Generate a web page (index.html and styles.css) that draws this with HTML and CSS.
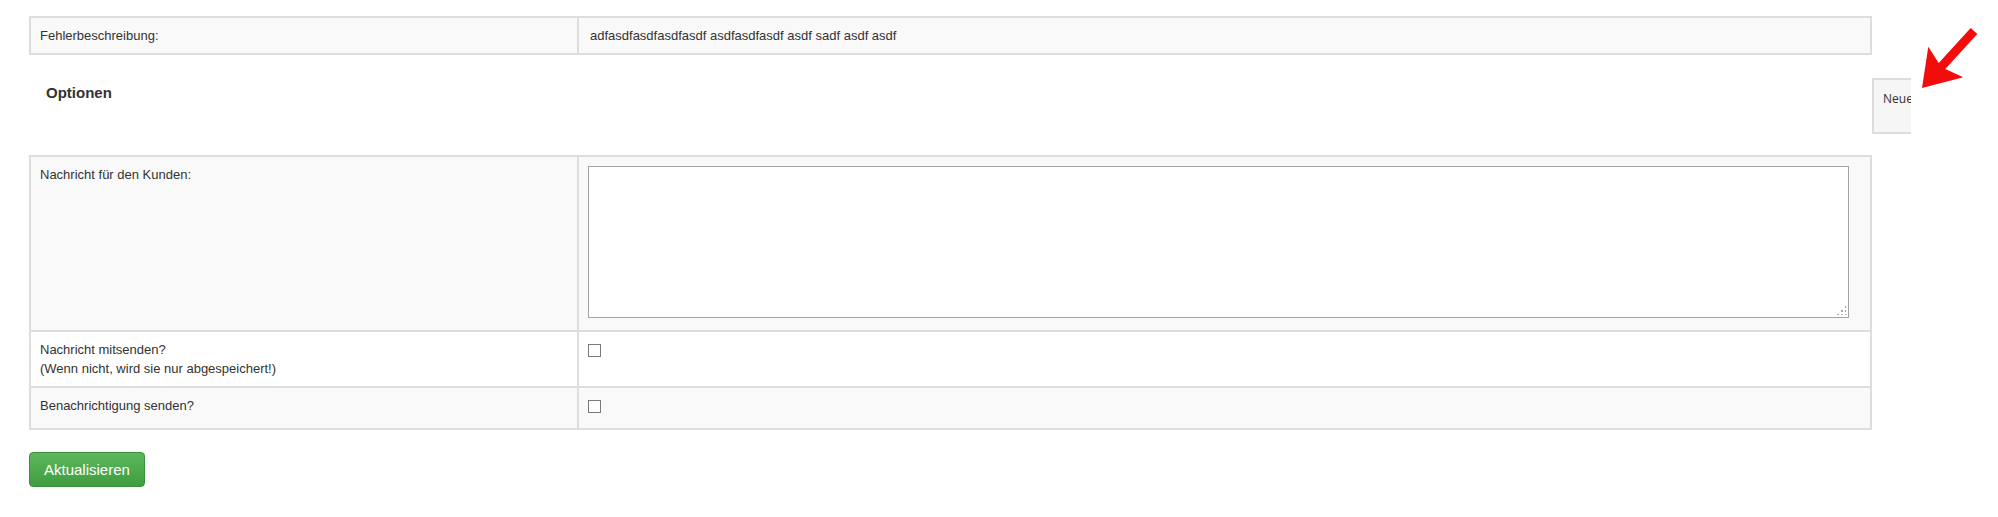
FILE: index.html
```html
<!DOCTYPE html>
<html lang="de">
<head>
<meta charset="utf-8">
<title>Optionen</title>
<link rel="stylesheet" href="styles.css">
</head>
<body>
<div class="page">
  <div class="main">
    <div class="grid info">
      <div class="cell odd">Fehlerbeschreibung:</div>
      <div class="cell odd value">adfasdfasdfasdfasdf asdfasdfasdf asdf sadf asdf asdf</div>
    </div>

    <h3 class="section-title">Optionen</h3>

    <div class="grid options">
      <div class="cell odd">Nachricht für den Kunden:</div>
      <div class="cell odd">
        <div class="textarea-wrap">
          <textarea class="message"></textarea>
          <span class="grip"></span>
        </div>
      </div>

      <div class="cell">Nachricht mitsenden?<br>(Wenn nicht, wird sie nur abgespeichert!)</div>
      <div class="cell"><input type="checkbox" class="check"></div>

      <div class="cell odd">Benachrichtigung senden?</div>
      <div class="cell odd"><input type="checkbox" class="check"></div>
    </div>

    <button class="btn-success" type="button">Aktualisieren</button>
  </div>

  <aside class="side">
    <div class="neue">Neue</div>
  </aside>
</div>

<svg class="arrow" width="75" height="75" viewBox="0 0 75 75" aria-hidden="true">
  <polygon points="7,68 13.3,26.7 23.7,43 55.7,8 62.3,14 30.3,49 48.3,57.3" fill="#f20c0c"/>
</svg>
</body>
</html>
```

FILE: styles.css
```css
html, body {
  margin: 0;
  padding: 0;
  background: #ffffff;
}

body {
  font-family: "Liberation Sans", Arial, sans-serif;
  font-size: 13px;
  line-height: 19px;
  color: #333333;
}

.page {
  display: flex;
  align-items: flex-start;
  padding: 16px 0 0 29px;
}

.main {
  width: 1843px;
  flex: none;
}

.grid {
  display: grid;
  grid-template-columns: 546px 1fr;
  gap: 2px;
  background: #dddddd;
  border: 2px solid #dddddd;
}

.cell {
  background: #ffffff;
  padding: 8px 9px;
}

.cell.odd {
  background: #f9f9f9;
}

.cell.value {
  padding-left: 11px;
}

.section-title {
  margin: 28px 0 52px 17px;
  font-size: 15px;
  line-height: 20px;
  font-weight: bold;
  color: #333333;
}

.textarea-wrap {
  position: relative;
  width: 1261px;
  margin: 1px 0 4px;
}

.message {
  display: block;
  box-sizing: border-box;
  width: 1261px;
  height: 152px;
  margin: 0;
  padding: 4px 6px;
  border: 1px solid #a3a3a3;
  background: #ffffff;
  resize: none;
  font-family: "Liberation Sans", Arial, sans-serif;
  font-size: 13px;
  outline: none;
}

.grip {
  position: absolute;
  right: 3px;
  bottom: 3px;
  width: 10px;
  height: 10px;
  background:
    radial-gradient(circle, #a8a8a8 0.9px, transparent 1.2px) 8px 0 / 4px 4px no-repeat,
    radial-gradient(circle, #a8a8a8 0.9px, transparent 1.2px) 4px 4px / 4px 4px no-repeat,
    radial-gradient(circle, #a8a8a8 0.9px, transparent 1.2px) 8px 4px / 4px 4px no-repeat,
    radial-gradient(circle, #a8a8a8 0.9px, transparent 1.2px) 0 8px / 4px 4px no-repeat,
    radial-gradient(circle, #a8a8a8 0.9px, transparent 1.2px) 4px 8px / 4px 4px no-repeat,
    radial-gradient(circle, #a8a8a8 0.9px, transparent 1.2px) 8px 8px / 4px 4px no-repeat;
}

.check {
  -webkit-appearance: none;
  appearance: none;
  display: block;
  box-sizing: border-box;
  width: 13px;
  height: 13px;
  margin: 4px 0 7px;
  border: 1px solid #7a7a7a;
  border-radius: 0;
  background: #fdfdfd;
}

.btn-success {
  display: inline-block;
  box-sizing: border-box;
  height: 35px;
  margin-top: 22px;
  padding: 0 14px;
  border: 1px solid #3b8f3b;
  border-radius: 4px;
  background: linear-gradient(to bottom, #5cb85c 0%, #3f9c3f 100%);
  color: #ffffff;
  font-family: "Liberation Sans", Arial, sans-serif;
  font-size: 15px;
  line-height: 33px;
  cursor: pointer;
}

.side {
  flex: none;
  width: 39px;
  overflow: hidden;
  margin-top: 62px;
}

.neue {
  box-sizing: border-box;
  width: 160px;
  height: 56px;
  padding: 10px 9px 8px;
  border: 2px solid #dddddd;
  background: #f6f6f6;
  font-family: "Open Sans", "Noto Sans", sans-serif;
  font-size: 12px;
  line-height: 18px;
  color: #333333;
  white-space: nowrap;
}

.arrow {
  position: absolute;
  left: 1915px;
  top: 20px;
}
```
